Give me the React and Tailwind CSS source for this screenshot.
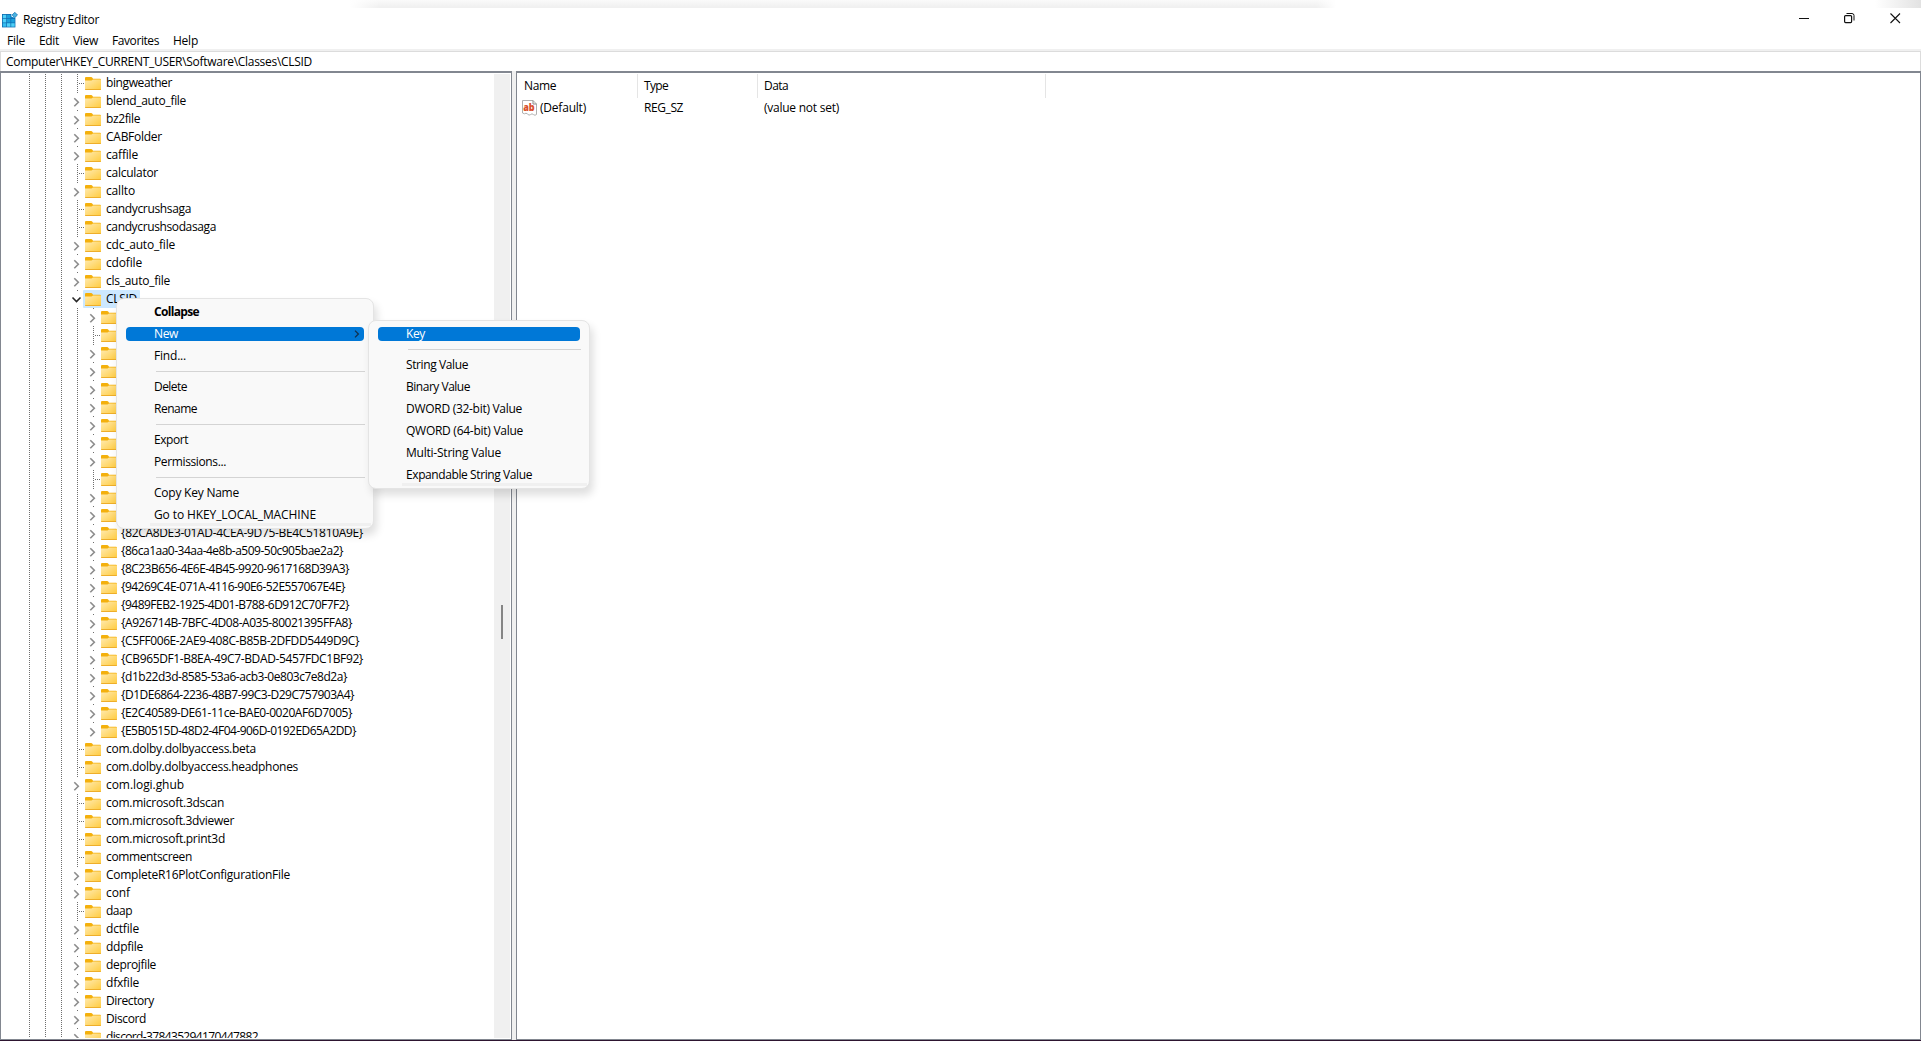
import { useLayoutEffect, useRef } from "react";

// Text whose tracking is adjusted so that it fills w pixels.
function Label({ children, w, className = "" }) {
  const ref = useRef(null);
  useLayoutEffect(() => {
    const el = ref.current;
    el.style.letterSpacing = "0px";
    const natural = el.getBoundingClientRect().width;
    el.style.letterSpacing = (w - natural) / children.length + "px";
  }, [children, w]);
  return (
    <span ref={ref} className={`inline-block whitespace-pre ${className}`}>
      {children}
    </span>
  );
}

const DOTS_V = "bg-[repeating-linear-gradient(to_bottom,#6e6e6e_0_1px,transparent_1px_2px)]";
const DOTS_H = "bg-[repeating-linear-gradient(to_right,#6e6e6e_0_1px,transparent_1px_2px)]";

// [name, width, kind, level]; kind: "+" closed, "-" open, "" leaf
const rows = [
  ["bingweather", 66, ""],
  ["blend_auto_file", 80, "+"],
  ["bz2file", 34, "+"],
  ["CABFolder", 56, "+"],
  ["caffile", 32, "+"],
  ["calculator", 52, ""],
  ["callto", 29, "+"],
  ["candycrushsaga", 85, ""],
  ["candycrushsodasaga", 110, ""],
  ["cdc_auto_file", 69, "+"],
  ["cdofile", 36, "+"],
  ["cls_auto_file", 64, "+"],
  ["CLSID", 31, "-"],
  ["", 0, "+", 1],
  ["", 0, "", 1],
  ["", 0, "+", 1],
  ["", 0, "+", 1],
  ["", 0, "+", 1],
  ["", 0, "+", 1],
  ["", 0, "+", 1],
  ["", 0, "+", 1],
  ["", 0, "+", 1],
  ["", 0, "", 1],
  ["", 0, "+", 1],
  ["", 0, "+", 1],
  ["{82CA8DE3-01AD-4CEA-9D75-BE4C51810A9E}", 242, "+", 1],
  ["{86ca1aa0-34aa-4e8b-a509-50c905bae2a2}", 222, "+", 1],
  ["{8C23B656-4E6E-4B45-9920-9617168D39A3}", 228, "+", 1],
  ["{94269C4E-071A-4116-90E6-52E557067E4E}", 224, "+", 1],
  ["{9489FEB2-1925-4D01-B788-6D912C70F7F2}", 228, "+", 1],
  ["{A926714B-7BFC-4D08-A035-80021395FFA8}", 231, "+", 1],
  ["{C5FF006E-2AE9-408C-B85B-2DFDD5449D9C}", 238, "+", 1],
  ["{CB965DF1-B8EA-49C7-BDAD-5457FDC1BF92}", 242, "+", 1],
  ["{d1b22d3d-8585-53a6-acb3-0e803c7e8d2a}", 226, "+", 1],
  ["{D1DE6864-2236-48B7-99C3-D29C757903A4}", 233, "+", 1],
  ["{E2C40589-DE61-11ce-BAE0-0020AF6D7005}", 231, "+", 1],
  ["{E5B0515D-48D2-4F04-906D-0192ED65A2DD}", 235, "+", 1],
  ["com.dolby.dolbyaccess.beta", 150, ""],
  ["com.dolby.dolbyaccess.headphones", 192, ""],
  ["com.logi.ghub", 78, "+"],
  ["com.microsoft.3dscan", 118, ""],
  ["com.microsoft.3dviewer", 128, ""],
  ["com.microsoft.print3d", 119, ""],
  ["commentscreen", 86, ""],
  ["CompleteR16PlotConfigurationFile", 184, "+"],
  ["conf", 24, "+"],
  ["daap", 26, ""],
  ["dctfile", 33, "+"],
  ["ddpfile", 37, "+"],
  ["deprojfile", 50, "+"],
  ["dfxfile", 33, "+"],
  ["Directory", 48, "+"],
  ["Discord", 40, "+"],
  ["discord-378435294170447882", 152, "+"],
];

function Folder() {
  return (
    <svg width="16" height="13" viewBox="0 0 16 13" className="shrink-0">
      <defs>
        <linearGradient id="folder" x1="0" y1="0" x2="1" y2="1">
          <stop offset="0" stopColor="#ffeab0" />
          <stop offset="1" stopColor="#ffcb3d" />
        </linearGradient>
      </defs>
      <path d="M0 1Q0 0 1 0H6Q7 0 7.6 1L8 1.7H15Q16 1.7 16 2.7V5H0Z" fill="#f4b00c" />
      <path d="M0 3.6H6.5L8 2.6H16V12.2Q16 13 15 13H1Q0 13 0 12.2Z" fill="url(#folder)" />
      <path d="M0.2 12.5H15.8" stroke="#eeae2a" />
    </svg>
  );
}

function Guide() {
  return <div className={`w-px mr-[15px] h-full shrink-0 ${DOTS_V}`} />;
}

function Branch({ kind }) {
  if (kind === "")
    return (
      <div className="w-4 h-full flex items-center shrink-0">
        <div className={`w-px h-full ${DOTS_V}`} />
        <div className={`w-[6px] h-px ml-px ${DOTS_H}`} />
      </div>
    );
  return (
    <div className="w-4 h-full flex flex-col shrink-0">
      <div className="w-px h-px bg-[#6e6e6e]" />
      {kind === "+" ? (
        <svg width="9" height="12" viewBox="0 0 9 12" className="-ml-[5px] mt-[3px]">
          <path d="M2.3 2.3L6.3 6.3L2.3 10.3" fill="none" stroke="#8c8c8c" strokeWidth="1.6" />
        </svg>
      ) : (
        <svg width="11" height="10" viewBox="0 0 11 10" className="-ml-[6px] mt-[3px]">
          <path d="M1.5 3.5L5.5 7.5L9.5 3.5" fill="none" stroke="#262626" strokeWidth="1.6" />
        </svg>
      )}
    </div>
  );
}

function TreeRow({ row }) {
  const [name, w, kind, level] = row;
  return (
    <div className="h-[18px] flex shrink-0">
      <Guide />
      <Guide />
      <Guide />
      {level === 1 && <Guide />}
      <Branch kind={kind} />
      <div
        className={
          kind === "-"
            ? "flex -ml-[10px] pl-0.5 pr-[3px] bg-[#cce8ff] items-center rounded-[1px]"
            : "flex -ml-[10px] pl-0.5 items-center"
        }
      >
        <Folder />
        {name && (
          <Label w={w} className={level === 1 ? "ml-[4px]" : "ml-[5px]"}>
            {name}
          </Label>
        )}
      </div>
    </div>
  );
}

function MenuItem({ text, w, active, bold, arrow }) {
  return (
    <div className="h-[22px] flex items-center px-[9px]">
      <div
        className={
          active
            ? "h-[14px] grow rounded bg-[#0078d7] text-white pl-7 pr-1 flex items-center justify-between"
            : "h-[14px] grow pl-7 pr-1 flex items-center justify-between"
        }
      >
        <Label w={w} className={bold ? "font-bold" : ""}>
          {text}
        </Label>
        {arrow && (
          <svg width="6" height="8" viewBox="0 0 6 8">
            <path d="M1 0.6L4.4 4L1 7.4" fill="none" stroke="#10304f" strokeWidth="1.3" />
          </svg>
        )}
      </div>
    </div>
  );
}

function Menu({ items, className }) {
  return (
    <div
      className={`absolute box-border rounded-lg border border-[#e4e4e4] bg-[#f9f9f9] pt-[2px] shadow-[3px_6px_9px_rgba(0,0,0,0.13)] ${className}`}
    >
      {items.map((it, i) =>
        it === null ? (
          <div key={i} className="h-[9px] pt-1 pl-[39px] pr-2">
            <div className="h-px bg-[#d4d4d4]" />
          </div>
        ) : (
          <MenuItem key={i} {...it} />
        )
      )}
      <div className="absolute bottom-[2px] left-[33px] right-[2px] h-[3px] bg-[#f0f0f0]" />
    </div>
  );
}

const contextItems = [
  { text: "Collapse", w: 45, bold: true },
  { text: "New", w: 24, active: true, arrow: true },
  { text: "Find...", w: 32 },
  null,
  { text: "Delete", w: 33 },
  { text: "Rename", w: 43 },
  null,
  { text: "Export", w: 34 },
  { text: "Permissions...", w: 72 },
  null,
  { text: "Copy Key Name", w: 85 },
  { text: "Go to HKEY_LOCAL_MACHINE", w: 162 },
];

const newItems = [
  { text: "Key", w: 19, active: true },
  null,
  { text: "String Value", w: 62 },
  { text: "Binary Value", w: 64 },
  { text: "DWORD (32-bit) Value", w: 116 },
  { text: "QWORD (64-bit) Value", w: 117 },
  { text: "Multi-String Value", w: 95 },
  { text: "Expandable String Value", w: 126 },
];

const cells = ["#4fd0f7", "#1ba0dc", "#0f86c8", "#4fd0f7", "#1ba0dc", "#1ba0dc", "#35bdf0", "#4fd0f7", "#4fd0f7"];

function AppIcon() {
  return (
    <svg width="16" height="16" viewBox="0 0 16 16">
      <rect x="0" y="2" width="13.4" height="13.4" fill="#0f6cb0" />
      {cells.map((fill, i) => (
        <rect
          key={i}
          x={0.8 + (i % 3) * 4.2}
          y={2.8 + Math.floor(i / 3) * 4.2}
          width="3.5"
          height="3.5"
          fill={fill}
        />
      ))}
      <path d="M9.4 0H16V6H13.4L9.4 4.6Z" fill="#fff" />
      <path d="M12.8 0.3L15.5 3L12.8 5.7L10.1 3Z" fill="#4bb4e0" stroke="#0f6cb0" strokeWidth="0.7" />
    </svg>
  );
}

function StringIcon() {
  return (
    <svg width="15" height="16" viewBox="0 0 15 16">
      <path
        d="M0.5 0.5H11L14.5 4V14.5Q13 16 11.5 14.6Q10 13 8.5 14.6Q7 16 5.5 14Q4 12.5 2.5 13.8L0.5 13Z"
        fill="#fff"
        stroke="#b0b0b0"
      />
      <path d="M11 0.5V4H14.5" fill="none" stroke="#8c8c8c" />
      <text x="1.2" y="10.6" fontSize="10" fontWeight="800" fill="#d9502e" fontFamily="Open Sans, sans-serif" textLength="11.5" lengthAdjust="spacingAndGlyphs">
        ab
      </text>
    </svg>
  );
}

export default function App() {
  return (
    <div className="relative w-[1921px] h-[1041px] overflow-hidden bg-white flex flex-col text-black text-[12px] leading-[18px] font-['Open_Sans','Noto_Sans',sans-serif]">
      <div className="h-2 shrink-0 flex justify-between pl-[350px]">
        <div className="w-[986px] h-full bg-[linear-gradient(to_right,white,transparent_3%,transparent_98%,white),linear-gradient(to_bottom,#fafafa,#efefef)]" />
        <div className="w-[46px] h-full bg-linear-to-r from-white to-[#e2e2e2]" />
      </div>
      <div className="h-6 shrink-0 flex items-center justify-between pr-5">
        <div className="flex items-center pl-[2px]">
          <AppIcon />
          <Label w={76} className="ml-[5px]">
            Registry Editor
          </Label>
        </div>
        <svg width="104" height="12" viewBox="0 0 104 12" fill="none" stroke="#111" className="-mt-[4px]">
          <path d="M2 6.5H12" />
          <rect x="47.6" y="3.6" width="7" height="7" rx="1" strokeWidth="1.2" />
          <path d="M49.5 1.5H55Q57 1.5 57 3.5V8.5" />
          <path d="M93.5 1.5L103 11M103 1.5L93.5 11" strokeWidth="1.1" />
        </svg>
      </div>
      <div className="h-[17px] shrink-0 flex items-center">
        <Label w={18} className="ml-[7px]">File</Label>
        <Label w={20} className="ml-[14px]">Edit</Label>
        <Label w={25} className="ml-[14px]">View</Label>
        <Label w={47} className="ml-[14px]">Favorites</Label>
        <Label w={25} className="ml-[14px]">Help</Label>
      </div>
      <div className="h-[22px] shrink-0 border-t-2 border-[#f0f0f0]">
        <div className="h-full border border-b-0 border-[#dcdcdc] pl-[5px] flex items-center">
          <Label w={306}>Computer\HKEY_CURRENT_USER\Software\Classes\CLSID</Label>
        </div>
      </div>
      <div className="h-[969px] shrink-0 flex bg-[#f0f0f0]">
        <div className="w-[512px] h-full border border-t-2 border-[#828790] bg-white flex pt-px">
          <div className="w-[493px] h-[964px] overflow-hidden flex flex-col pl-7">
            {rows.map((r, i) => (
              <TreeRow key={i} row={r} />
            ))}
          </div>
          <div className="w-4 h-[964px] bg-[#f0f0f0] flex justify-center pt-[531px]">
            <div className="w-[2px] h-[34px] bg-[#858585]" />
          </div>
        </div>
        <div className="ml-1 grow h-full border border-t-2 border-[#828790] bg-white pt-px">
          <div className="flex h-6">
            <div className="w-[121px] pl-[7px] border-r border-[#e5e5e5] flex items-center">
              <Label w={32}>Name</Label>
            </div>
            <div className="w-[108px] grow-0 shrink-0 basis-[120px] pl-[6px] border-r border-[#e5e5e5] flex items-center">
              <Label w={24}>Type</Label>
            </div>
            <div className="w-[288px] pl-[6px] border-r border-[#e5e5e5] flex items-center">
              <Label w={24}>Data</Label>
            </div>
          </div>
          <div className="flex h-5 items-center">
            <div className="w-[127px] pl-[5px] flex items-center">
              <StringIcon />
              <Label w={46} className="ml-[3px]">(Default)</Label>
            </div>
            <div className="w-[120px]">
              <Label w={39}>REG_SZ</Label>
            </div>
            <Label w={75}>(value not set)</Label>
          </div>
        </div>
      </div>
      <div className="h-px shrink-0 bg-[#2d1530]" />
      <Menu items={contextItems} className="left-[116px] top-[298px] w-[258px] h-[231px]" />
      <Menu items={newItems} className="left-[368px] top-[320px] w-[222px] h-[169px]" />
    </div>
  );
}
